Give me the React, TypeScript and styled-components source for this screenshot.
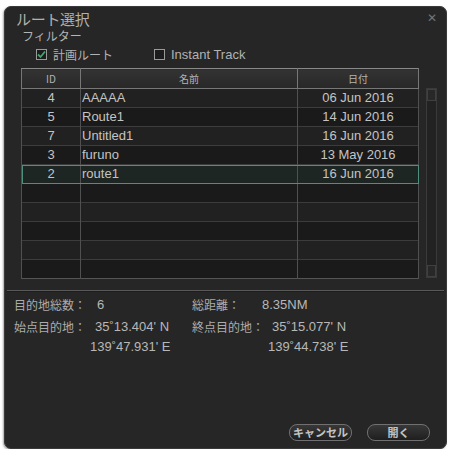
import React from "react";
import styled, { createGlobalStyle } from "styled-components";

const Global = createGlobalStyle`
  html, body { margin: 0; padding: 0; background: #ffffff; }
  body { font-family: "Noto Sans", "Noto Sans CJK JP", sans-serif; }
  * { box-sizing: border-box; }
`;

const FONT = `"Liberation Sans", "Noto Sans CJK JP", sans-serif`;
const JP = `"Noto Sans CJK JP", "Liberation Sans", sans-serif`;

const Dialog = styled.div`
  margin: 6px 0 0 4px;
  width: 443px;
  height: 443px;
  background: #262626;
  border: 1px solid #3a3a3a;
  border-radius: 7px;
  box-shadow: -1px 1px 2px rgba(0, 0, 0, 0.35);
  display: flex;
  flex-direction: column;
  color: #bcbcbc;
  font-family: ${FONT};
`;

const TitleBar = styled.div`
  height: 22px;
  padding: 0 9px 0 11px;
  display: flex;
  align-items: center;
  justify-content: space-between;
`;

const Title = styled.div`
  font-family: ${JP};
  font-size: 15px;
  color: #b0b0b0;
  letter-spacing: -0.3px;
`;

const Close = styled.div`
  font-size: 12px;
  color: #747474;
  line-height: 1;
`;

const FilterLabel = styled.div`
  font-family: ${JP};
  font-size: 12px;
  line-height: 13px;
  padding-left: 17px;
  color: #b4b4b4;
`;

const CheckRow = styled.div`
  margin-top: 2px;
  height: 20px;
  padding-left: 31px;
  display: flex;
  align-items: center;
`;

const CheckItem = styled.label<{ $width?: number }>`
  display: flex;
  align-items: center;
  gap: 6px;
  width: ${(p) => (p.$width ? `${p.$width}px` : "auto")};
  font-size: 13px;
  color: #b2b2b2;
`;

const CheckLabel = styled.span<{ $jp?: boolean }>`
  font-family: ${(p) => (p.$jp ? JP : FONT)};
  font-size: ${(p) => (p.$jp ? "12px" : "13px")};
`;

const Box = styled.span`
  width: 11px;
  height: 11px;
  border: 1px solid #9a9a9a;
  background: #1c1c1c;
  display: flex;
  align-items: center;
  justify-content: center;
`;

const TableArea = styled.div`
  margin-top: 4px;
  padding-left: 16px;
  display: flex;
  gap: 7px;
`;

const Table = styled.table`
  width: 397px;
  border-collapse: collapse;
  table-layout: fixed;
  border: 1px solid #555;
  font-size: 13px;
`;

const HeadCell = styled.th<{ $w: number }>`
  width: ${(p) => p.$w}px;
  height: 20px;
  padding: 0;
  font-family: ${JP};
  font-weight: normal;
  font-size: 10px;
  color: #b4b4b4;
  background: linear-gradient(#333, #282828);
  border: 1px solid #777;
  border-top-color: #888;
`;

const Row = styled.tr<{ $dark: boolean; $sel?: boolean }>`
  height: 19px;
  background: ${(p) => (p.$sel ? "#1e2624" : p.$dark ? "#1a1a1a" : "#212121")};
  outline: ${(p) => (p.$sel ? "1px solid #4f8f7d" : "none")};
  outline-offset: -1px;
`;

const Cell = styled.td<{ $align: "left" | "center" }>`
  padding: 0 0 0 ${(p) => (p.$align === "left" ? "1px" : "0")};
  text-align: ${(p) => p.$align};
  color: #c4c4c4;
  border-left: 1px solid #505050;
  border-right: 1px solid #505050;
  border-top: 1px solid #3c3c3c;
  white-space: nowrap;
  overflow: hidden;
  line-height: 18px;
`;

const ScrollTrack = styled.div`
  margin-top: 20px;
  width: 11px;
  height: 190px;
  border: 1px solid #3a3a3a;
  background: #222;
  display: flex;
  flex-direction: column;
  justify-content: space-between;
`;

const ScrollBtn = styled.div`
  height: 12px;
  border: 1px solid #404040;
  background: #282828;
`;

const Separator = styled.div`
  margin: 11px 2px 0;
  border-top: 1px solid #5a5a5a;
  border-bottom: 1px solid #1c1c1c;
`;

const InfoGrid = styled.div`
  padding: 1px 0 0 9px;
  display: grid;
  grid-template-columns: 81px 97px 80px 1fr;
  grid-template-rows: 23px 20px 20px;
  align-items: center;
  font-size: 13px;
`;

const InfoLabel = styled.div`
  font-family: ${JP};
  font-size: 12px;
  color: #acacac;
  white-space: nowrap;
`;

const InfoValue = styled.div<{ $shift: number }>`
  margin-left: ${(p) => p.$shift}px;
  color: #b8b8b8;
  white-space: nowrap;
`;

const ButtonRow = styled.div`
  margin-top: auto;
  padding: 0 16px 7px 0;
  display: flex;
  justify-content: flex-end;
  gap: 15px;
`;

const Button = styled.button`
  width: 63px;
  height: 17px;
  padding: 0;
  border-radius: 8px;
  border: 1px solid #707070;
  background: linear-gradient(#383838, #1f1f1f);
  color: #c4c4c4;
  font-family: ${JP};
  font-size: 11px;
  font-weight: bold;
  line-height: 15px;
`;

const Check = () => (
  <svg width="9" height="9" viewBox="0 0 9 9">
    <path d="M1 4.5 L3.5 7 L8 1.5" fill="none" stroke="#3fa66a" strokeWidth="1.8" />
  </svg>
);

const routes = [
  { id: "4", name: "AAAAA", date: "06 Jun 2016" },
  { id: "5", name: "Route1", date: "14 Jun 2016" },
  { id: "7", name: "Untitled1", date: "16 Jun 2016" },
  { id: "3", name: "furuno", date: "13 May 2016" },
  { id: "2", name: "route1", date: "16 Jun 2016" },
];

export default function App() {
  const rows = Array.from({ length: 10 }, (_, i) => routes[i] ?? null);
  return (
    <>
      <Global />
      <Dialog>
        <TitleBar>
          <Title>ルート選択</Title>
          <Close>✕</Close>
        </TitleBar>
        <FilterLabel>フィルター</FilterLabel>
        <CheckRow>
          <CheckItem $width={118}>
            <Box>
              <Check />
            </Box>
            <CheckLabel $jp>計画ルート</CheckLabel>
          </CheckItem>
          <CheckItem>
            <Box />
            <CheckLabel>Instant Track</CheckLabel>
          </CheckItem>
        </CheckRow>
        <TableArea>
          <Table>
            <thead>
              <tr>
                <HeadCell $w={59}>ID</HeadCell>
                <HeadCell $w={217}>名前</HeadCell>
                <HeadCell $w={121}>日付</HeadCell>
              </tr>
            </thead>
            <tbody>
              {rows.map((r, i) => (
                <Row key={i} $dark={i % 2 === 1} $sel={i === 4}>
                  <Cell $align="center">{r?.id ?? ""}</Cell>
                  <Cell $align="left">{r?.name ?? ""}</Cell>
                  <Cell $align="center">{r?.date ?? ""}</Cell>
                </Row>
              ))}
            </tbody>
          </Table>
          <ScrollTrack>
            <ScrollBtn />
            <ScrollBtn />
          </ScrollTrack>
        </TableArea>
        <Separator />
        <InfoGrid>
          <InfoLabel>目的地総数：</InfoLabel>
          <InfoValue $shift={2}>6</InfoValue>
          <InfoLabel>総距離：</InfoLabel>
          <InfoValue $shift={-10}>8.35NM</InfoValue>

          <InfoLabel>始点目的地：</InfoLabel>
          <InfoValue $shift={0}>35˚13.404' N</InfoValue>
          <InfoLabel>終点目的地：</InfoLabel>
          <InfoValue $shift={0}>35˚15.077' N</InfoValue>

          <span />
          <InfoValue $shift={-5}>139˚47.931' E</InfoValue>
          <span />
          <InfoValue $shift={-4}>139˚44.738' E</InfoValue>
        </InfoGrid>
        <ButtonRow>
          <Button>キャンセル</Button>
          <Button>開く</Button>
        </ButtonRow>
      </Dialog>
    </>
  );
}
